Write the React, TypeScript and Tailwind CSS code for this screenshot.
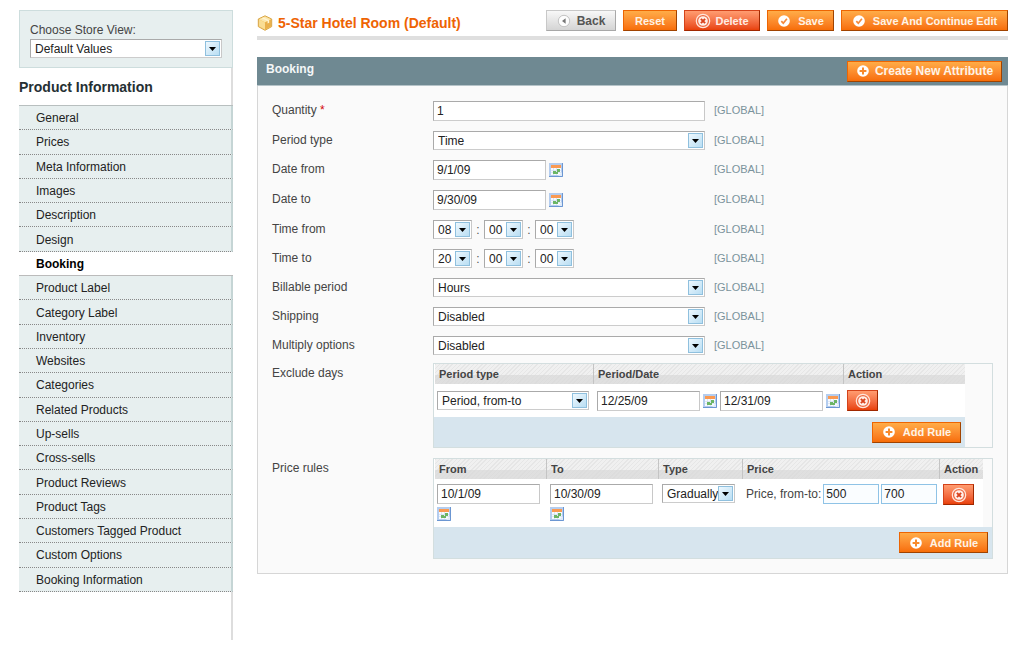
import React from 'react';
import clsx from 'clsx';

const tabs = [
  'General',
  'Prices',
  'Meta Information',
  'Images',
  'Description',
  'Design',
  'Booking',
  'Product Label',
  'Category Label',
  'Inventory',
  'Websites',
  'Categories',
  'Related Products',
  'Up-sells',
  'Cross-sells',
  'Product Reviews',
  'Product Tags',
  'Customers Tagged Product',
  'Custom Options',
  'Booking Information'
];

const BackIcon = () => (
  <svg width="14" height="14" viewBox="0 0 14 14" aria-hidden="true">
    <circle cx="7" cy="7" r="5.7" fill="#fdfdfd" stroke="#c4c4c4" />
    <path d="M8.6 4.3v5.4L5 7z" fill="#777" />
  </svg>
);

const CheckIcon = () => (
  <svg width="14" height="14" viewBox="0 0 14 14" aria-hidden="true">
    <circle cx="7" cy="7" r="5.8" fill="#fff" />
    <path d="M4.3 7.2l2 2 3.6-4.4" fill="none" stroke="#f58a3c" strokeWidth="1.7" />
  </svg>
);

const PlusIcon = () => (
  <svg width="14" height="14" viewBox="0 0 14 14" aria-hidden="true">
    <circle cx="7" cy="7" r="5.8" fill="#fff" />
    <path d="M7 3.6v6.8M3.6 7h6.8" stroke="#f88a2c" strokeWidth="2" />
  </svg>
);

const DeleteIcon = () => (
  <svg width="16" height="16" viewBox="0 0 16 16" aria-hidden="true">
    <circle cx="8" cy="8" r="6.7" fill="#ee6a42" stroke="#ffe6dc" strokeWidth="1.2" />
    <circle cx="8" cy="8" r="4.8" fill="#fff0ea" />
    <path d="M5.9 5.9l4.2 4.2M10.1 5.9l-4.2 4.2" stroke="#d9421c" strokeWidth="2" />
  </svg>
);

const CalendarIcon = () => (
  <svg width="14" height="14" viewBox="0 0 14 14" aria-hidden="true">
    <rect width="14" height="14" fill="#b4cdef" />
    <path d="M13.5 0v13.5H0" fill="none" stroke="#6b96d2" />
    <rect x="2" y="2" width="10" height="10" fill="#f7fafe" />
    <rect x="2" y="2" width="10" height="3" fill="#fa9a52" />
    <path d="M2 7.5h10M2 9.5h10M4.5 5v7M7.5 5v7" stroke="#c9d9ee" strokeWidth="0.6" />
    <rect x="8" y="6" width="3" height="3" fill="#6bb565" />
    <rect x="4" y="8" width="3" height="3" fill="#6bb565" />
    <rect x="7" y="9" width="2" height="2" fill="#6bb565" />
    <path d="M9 13l4-4v4z" fill="#dde9f8" />
  </svg>
);

const ProductIcon = () => (
  <svg width="16" height="16" viewBox="0 0 16 16" aria-hidden="true">
    <path d="M8 .8l6.7 3.2v7.6L8 15.3 1.3 11.6V4z" fill="#f3c763" stroke="#d9a648" />
    <path d="M8 1.6L13.9 4.3 8 7.2 2.1 4.3z" fill="#fbe7ae" />
    <path d="M8 7.4l5.9-2.9v6.7L8 14.5z" fill="#e9b04c" />
    <path d="M8 7.4L2.1 4.5v6.7L8 14.5z" fill="#f9dd94" />
    <path d="M4.6 3.2l6 2.8v2.6l1.6-.9V5.2L6.3 2.4z" fill="#fff4d3" />
  </svg>
);

type ButtonProps = {
  children?: React.ReactNode;
  icon?: React.ReactNode;
  variant?: 'orange' | 'gray' | 'red';
  size?: 'sm' | 'md';
  className?: string;
  label?: string;
};

const Button: React.FC<ButtonProps> = ({ children, icon, variant = 'orange', size = 'sm', className, label }) => (
  <button
    type="button"
    aria-label={label}
    className={clsx(
      'flex h-[21px] shrink-0 items-center justify-center border leading-4 font-bold whitespace-nowrap',
      size === 'sm' ? 'text-[11px]' : 'text-xs',
      variant === 'orange' &&
        'border-[#ed6502] border-r-[#a04300] border-b-[#a04300] bg-linear-to-b from-[#ffac47] to-[#f76d06] text-[#fff3e6]',
      variant === 'gray' &&
        'border-[#c8c8c8] border-r-[#a8a8a8] border-b-[#a8a8a8] bg-linear-to-b from-[#f8f8f8] to-[#d4d4d4] text-[#555]',
      variant === 'red' &&
        'border-[#d4431a] border-r-[#a02800] border-b-[#a02800] bg-linear-to-b from-[#ff9c70] to-[#e84006] text-[#ffece4]',
      className
    )}
  >
    {icon}
    {children}
  </button>
);

type FieldProps = {
  id?: string;
  label?: string;
  value: string;
  className?: string;
};

const TextInput: React.FC<FieldProps & { highlight?: boolean }> = ({ id, label, value, className, highlight }) => (
  <input
    id={id}
    type="text"
    aria-label={label}
    defaultValue={value}
    className={clsx(
      'h-[20px] min-w-0 border text-xs text-[#222] outline-none',
      highlight
        ? 'border-[#8fc3e6] bg-[#fafdff] px-[2px]'
        : 'border-[#aaa] border-r-[#c8c8c8] border-b-[#ccc] bg-white px-[3px]',
      className
    )}
  />
);

const Select: React.FC<FieldProps> = ({ id, label, value, className }) => (
  <div className={clsx('relative', className)}>
    <select
      id={id}
      aria-label={label}
      defaultValue={value}
      className="block h-[19px] w-full appearance-none border border-[#aaa] border-r-[#c8c8c8] border-b-[#ccc] bg-white pl-[4px] text-xs text-[#222] outline-none"
    >
      <option>{value}</option>
    </select>
    <span className="pointer-events-none absolute top-[2px] right-[2px] flex h-[15px] w-[15px] items-center justify-center border border-[#8fc0de] bg-linear-to-br from-[#eef8fe] to-[#b9def3]">
      <svg width="7" height="4" viewBox="0 0 7 4" aria-hidden="true">
        <path d="M0 0h7L3.5 4z" fill="#000" />
      </svg>
    </span>
  </div>
);

const CalendarButton = ({ label }: { label: string }) => (
  <button type="button" aria-label={label} className="block shrink-0">
    <CalendarIcon />
  </button>
);

const DateField: React.FC<FieldProps> = ({ id, value, label }) => (
  <div className="flex items-center gap-[3px]">
    <TextInput id={id} value={value} className="w-[113px]" />
    <CalendarButton label={`Pick ${label}`} />
  </div>
);

const TimeField = ({ id, label, values }: { id: string; label: string; values: string[] }) => (
  <div className="flex items-center text-xs text-[#555]">
    <Select id={id} value={values[0]} className="w-[39px]" />
    <span className="w-3 text-center">:</span>
    <Select label={`${label} minutes`} value={values[1]} className="w-[39px]" />
    <span className="w-3 text-center">:</span>
    <Select label={`${label} seconds`} value={values[2]} className="w-[39px]" />
  </div>
);

type RowProps = { id: string; label: string; required?: boolean; children: React.ReactNode };

const FormRow: React.FC<RowProps> = ({ id, label, required, children }) => (
  <div className="flex items-center">
    <label htmlFor={id} className="w-[161px] shrink-0 pb-[2px] text-xs leading-4 text-[#444]">
      {label}
      {required && <span className="text-[#d40707]"> *</span>}
    </label>
    <div className="w-[272px]">{children}</div>
    <span className="ml-[9px] pb-[2px] text-[11px] leading-4 text-[#7a939c]">[GLOBAL]</span>
  </div>
);

const Th = ({ children }: { children: React.ReactNode }) => (
  <th
    scope="col"
    className="h-5 border-l border-l-[#c4c4c4] bg-[linear-gradient(transparent_55%,#d8d8d8b0_55%),repeating-linear-gradient(135deg,#e6e6e6_0_1px,#f0f0f0_1px_3px)] pt-px pl-[4px] text-left text-[11px] font-bold text-[#444] first:border-l-white"
  >
    {children}
  </th>
);

const Header = () => (
  <header className="flex h-[30px] items-start justify-between border-b-4 border-[#dfdfdf]">
    <div className="flex items-center gap-[5px] pt-[3px]">
      <ProductIcon />
      <h1 className="text-sm leading-5 font-bold text-[#ee6303]">5-Star Hotel Room (Default)</h1>
    </div>
    <div className="flex gap-[7px]">
      <Button variant="gray" size="md" icon={<BackIcon />} className="w-[70px] gap-[6px]">Back</Button>
      <Button className="w-[54px]">Reset</Button>
      <Button variant="red" icon={<DeleteIcon />} className="w-[76px] gap-[4px]">Delete</Button>
      <Button icon={<CheckIcon />} className="w-[67px] gap-[7px]">Save</Button>
      <Button icon={<CheckIcon />} className="w-[167px] gap-[7px]">Save And Continue Edit</Button>
    </div>
  </header>
);

const Sidebar = () => (
  <aside className="flex w-[214px] shrink-0 flex-col">
    <div className="h-[58px] border border-[#cddddd] bg-[#e7efef] px-[10px] pt-[11px]">
      <label htmlFor="store" className="block pb-px text-xs leading-4 text-[#444]">Choose Store View:</label>
      <Select id="store" value="Default Values" />
    </div>
    <h2 className="h-[37px] border-r-2 border-[#ddd] pt-[9px] text-sm leading-5 font-bold text-[#253033]">
      Product Information
    </h2>
    <ul className="flex min-h-[487px] flex-col border-t border-[#b8bfbf]">
      {tabs.map(tab => (
        <li key={tab} className="flex grow">
          <a
            href="#"
            className={clsx(
              'flex grow items-center border-b pt-px pl-[17px] text-xs text-[#222]',
              tab === 'Booking'
                ? 'border-[#bbb] bg-white font-bold text-black'
                : 'border-r-2 border-b-[#888] border-r-[#c5d5d5] bg-[#e7efef] [border-bottom-style:dotted]'
            )}
          >
            {tab}
          </a>
        </li>
      ))}
    </ul>
    <div className="grow border-r-2 border-[#ddd]" />
  </aside>
);

const ExcludeDays = () => (
  <div className="grow border border-[#d3dedf] pr-[27px]">
    <table className="w-full table-fixed border-separate border-spacing-0 bg-white">
      <colgroup>
        <col className="w-[159px]" />
        <col />
        <col className="w-[122px]" />
      </colgroup>
      <thead>
        <tr>
          <Th>Period type</Th>
          <Th>Period/Date</Th>
          <Th>Action</Th>
        </tr>
      </thead>
      <tbody>
        <tr className="h-[33px]">
          <td className="px-[3px]">
            <Select label="Period type" value="Period, from-to" className="w-[152px]" />
          </td>
          <td className="pl-[4px]">
            <div className="flex items-center gap-[3px]">
              <TextInput label="Exclude from" value="12/25/09" className="w-[103px]" />
              <CalendarButton label="Pick exclude from" />
              <TextInput label="Exclude to" value="12/31/09" className="w-[103px]" />
              <CalendarButton label="Pick exclude to" />
            </div>
          </td>
          <td className="pl-[4px]">
            <Button variant="red" icon={<DeleteIcon />} label="Delete rule" className="w-[31px]" />
          </td>
        </tr>
      </tbody>
    </table>
    <div className="flex h-[30px] items-center justify-end bg-[#d7e5ee] pr-[4px]">
      <Button icon={<PlusIcon />} className="w-[89px] gap-[7px]">Add Rule</Button>
    </div>
  </div>
);

const PriceRules = () => (
  <div className="grow border border-[#d3dedf]">
    <div className="pr-[9px]">
      <table className="w-full table-fixed border-separate border-spacing-0 bg-white">
        <colgroup>
          <col className="w-[112px]" />
          <col className="w-[112px]" />
          <col className="w-[84px]" />
          <col />
          <col className="w-[44px]" />
        </colgroup>
        <thead>
          <tr>
            <Th>From</Th>
            <Th>To</Th>
            <Th>Type</Th>
            <Th>Price</Th>
            <Th>Action</Th>
          </tr>
        </thead>
        <tbody>
          <tr className="h-[48px] align-top">
            <td className="pt-[5px] pl-[3px]">
              <TextInput label="Price from date" value="10/1/09" className="mb-[3px] block w-[103px]" />
              <CalendarButton label="Pick price from date" />
            </td>
            <td className="pt-[5px] pl-[4px]">
              <TextInput label="Price to date" value="10/30/09" className="mb-[3px] block w-[103px]" />
              <CalendarButton label="Pick price to date" />
            </td>
            <td className="pt-[5px] pl-[4px]">
              <Select label="Price type" value="Gradually" className="w-[73px]" />
            </td>
            <td className="pt-[5px] pl-[4px]">
              <div className="flex items-center gap-[2px] text-xs text-[#444]">
                <label htmlFor="price-from" className="whitespace-nowrap">Price, from-to:</label>
                <TextInput id="price-from" value="500" highlight className="w-[56px]" />
                <TextInput label="Price to" value="700" highlight className="w-[56px]" />
              </div>
            </td>
            <td className="pt-[5px] pl-[4px]">
              <Button variant="red" icon={<DeleteIcon />} label="Delete price rule" className="w-[31px]" />
            </td>
          </tr>
        </tbody>
      </table>
    </div>
    <div className="flex h-[31px] items-center justify-end bg-[#d7e5ee] pr-[4px]">
      <Button icon={<PlusIcon />} className="w-[89px] gap-[7px]">Add Rule</Button>
    </div>
  </div>
);

const BookingPanel = () => (
  <section className="mt-[17px]">
    <div className="flex h-[29px] items-center justify-between border-b border-[#b5c3c8] bg-[#6f8992] pr-[6px] pl-[9px]">
      <h2 className="pb-[4px] text-xs leading-4 font-bold text-[#f4f7f8]">Booking</h2>
      <Button size="md" icon={<PlusIcon />} className="w-[155px] gap-[5px]">Create New Attribute</Button>
    </div>
    <form className="border border-t-0 border-[#d6d6d6] bg-[#fafafa] px-[14px] pt-[15px] pb-[14px]">
      <div className="flex flex-col gap-[10px]">
        <FormRow id="qty" label="Quantity" required>
          <TextInput id="qty" value="1" className="block w-full" />
        </FormRow>
        <FormRow id="period-type" label="Period type">
          <Select id="period-type" value="Time" />
        </FormRow>
        <FormRow id="date-from" label="Date from">
          <DateField id="date-from" label="date from" value="9/1/09" />
        </FormRow>
        <FormRow id="date-to" label="Date to">
          <DateField id="date-to" label="date to" value="9/30/09" />
        </FormRow>
        <FormRow id="time-from" label="Time from">
          <TimeField id="time-from" label="Time from" values={['08', '00', '00']} />
        </FormRow>
        <FormRow id="time-to" label="Time to">
          <TimeField id="time-to" label="Time to" values={['20', '00', '00']} />
        </FormRow>
        <FormRow id="billable" label="Billable period">
          <Select id="billable" value="Hours" />
        </FormRow>
        <FormRow id="shipping" label="Shipping">
          <Select id="shipping" value="Disabled" />
        </FormRow>
        <FormRow id="multiply" label="Multiply options">
          <Select id="multiply" value="Disabled" />
        </FormRow>
      </div>
      <div className="mt-[8px] flex flex-col gap-[10px]">
        <div className="flex">
          <span className="w-[161px] shrink-0 pt-[2px] text-xs leading-4 text-[#444]">Exclude days</span>
          <ExcludeDays />
        </div>
        <div className="flex">
          <span className="w-[161px] shrink-0 pt-[2px] text-xs leading-4 text-[#444]">Price rules</span>
          <PriceRules />
        </div>
      </div>
    </form>
  </section>
);

const App: React.FC = () => {
  return (
    <div className="flex min-h-screen gap-6 bg-white py-[10px] pr-4 pl-[19px] font-['Liberation_Sans',Arial,sans-serif]">
      <Sidebar />
      <main className="min-w-0 grow">
        <Header />
        <BookingPanel />
      </main>
    </div>
  );
};

export default App;
